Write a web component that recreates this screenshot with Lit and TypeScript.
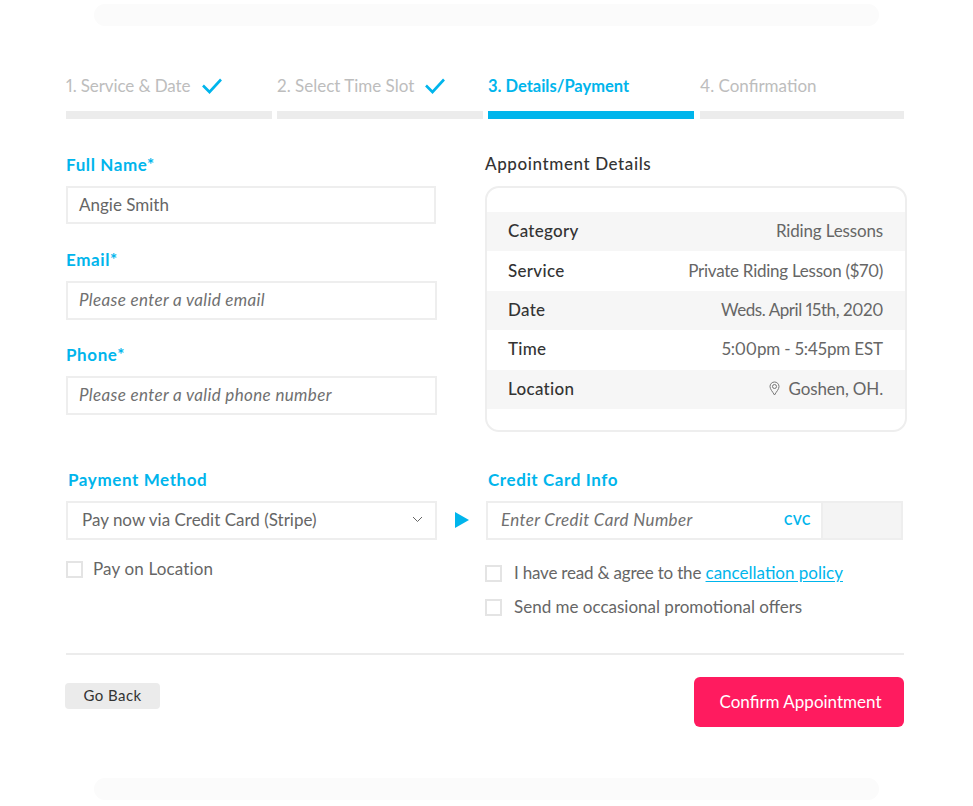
import { LitElement, html, css, svg } from "lit";
import { customElement } from "lit/decorators.js";

const check = svg`<path d="M1 7.500l6.500 6.500L19 1.500" fill="none" stroke="#00b5ec" stroke-width="2.600"/>`;

const rows = [
  ["Category", "Riding Lessons"],
  ["Service", "Private Riding Lesson ($70)"],
  ["Date", "Weds. April 15th, 2020"],
  ["Time", "5:00pm - 5:45pm EST"],
  ["Location", "Goshen, OH."],
];

@customElement("app-root")
export class AppRoot extends LitElement {
  static styles = css`
    :host {
      display: block;
      height: 806px;
      overflow: hidden;
      background: #fff;
      font-family: "Lato", "Open Sans", sans-serif;
      font-size: 17px;
      font-variant-numeric: proportional-nums;
      color: #666;
    }
    .pill {
      width: 785px;
      height: 22px;
      margin-left: 94px;
      border-radius: 11px;
      background: #fbfbfb;
    }
    .pill.top { margin-top: 4px; }
    .pill.bottom { margin-top: 51px; }
    .page { width: 841px; margin-left: 66px; }

    .steps {
      display: grid;
      grid-template-columns: 206px 206px 206px 205px;
      column-gap: 5px;
      width: 839px;
      margin-top: 50px;
    }
    .step { color: #bdbdbd; }
    .step:last-child { margin-left: 1px; }
    .step .name { display: flex; align-items: center; gap: 11px; height: 20px; line-height: 20px; }
    .step .name svg { width: 21px; height: 16px; }
    .step:first-child .name { gap: 12px; letter-spacing: -0.1px; }
    .step .bar { height: 8px; margin-top: 15px; background: #ececec; }
    .step.on { color: #00b5ec; font-weight: 700; font-size: 16.500px; }
    .step.on .bar { background: #00b5ec; }

    .top-grid {
      display: grid;
      grid-template-columns: 371px 422px;
      column-gap: 48px;
      margin-top: 35px;
    }
    .label { height: 20px; line-height: 22px; color: #00b5ec; font-weight: 700; letter-spacing: 0.6px; }
    .field + .field { margin-top: 25px; }
    .field:last-child { margin-top: 24px; }
    .input {
      box-sizing: border-box;
      display: flex;
      align-items: center;
      height: 39px;
      margin-top: 12px;
      padding: 0 11px 2px;
      border: 2px solid #eeeeee;
      background: #fff;
      white-space: nowrap;
    }
    .input.name { width: 370px; height: 38px; }
    .ph { font-style: italic; color: #707070; letter-spacing: 0.35px; }

    h2 {
      margin: 0;
      height: 20px;
      line-height: 20px;
      font-size: 17px;
      font-weight: 500;
      letter-spacing: 0.6px;
      color: #333;
    }
    .card {
      box-sizing: border-box;
      height: 246px;
      margin-top: 12px;
      padding: 24px 0;
      border: 2px solid #eeeeee;
      border-radius: 14px;
    }
    .row {
      box-sizing: border-box;
      display: flex;
      justify-content: space-between;
      align-items: center;
      height: 39.400px;
      padding: 0 22px 2px 21px;
    }
    .row:nth-child(odd) { background: #f6f6f6; }
    .row b { font-weight: 500; color: #333; letter-spacing: 0.3px; }
    .row span { display: flex; align-items: center; gap: 9px; letter-spacing: -0.15px; }
    .row:nth-child(2) span { letter-spacing: -0.25px; }
    .row:nth-child(3) span { letter-spacing: -0.42px; }

    .pay-grid {
      display: grid;
      grid-template-columns: 371px 417px;
      column-gap: 49px;
      margin-top: 37px;
    }
    .pay-grid .label { padding-left: 2px; }
    .select { position: relative; justify-content: space-between; padding: 0 12px 2px 14px; }
    .select .arrow { position: absolute; left: 387px; top: 9px; }
    .card-input { padding: 0; }
    .card-input .num {
      flex: 1;
      display: flex;
      align-items: center;
      justify-content: space-between;
      padding: 0 10px 2px 13px;
    }
    .cvc { font-size: 12.500px; font-weight: 700; color: #00b5ec; letter-spacing: 0.7px; margin-top: 2px; }
    .card-input .code {
      box-sizing: border-box;
      width: 80px;
      height: 100%;
      background: #f4f4f4;
      border-left: 2px solid #eeeeee;
    }
    .opt { display: flex; align-items: center; gap: 10px; height: 20px; white-space: nowrap; }
    .opt > span { margin-bottom: 2px; }
    .box {
      box-sizing: border-box;
      width: 17px;
      height: 17px;
      border: 2px solid #e4e4e4;
    }
    .left-opt { margin-top: 19px; letter-spacing: 0.15px; }
    .right-opts { display: grid; row-gap: 14px; margin-top: 23px; margin-left: -1px; }
    .right-opts .opt { gap: 12px; }
    .lead { letter-spacing: -0.2px; }
    a { color: #00b5ec; text-decoration: underline; text-underline-offset: 2px; }

    .rule { width: 838px; height: 2px; margin-top: 36px; background: #ececec; }
    .actions {
      display: flex;
      justify-content: space-between;
      align-items: flex-start;
      width: 838px;
      margin-top: 22px;
    }
    .back {
      width: 95px;
      height: 26px;
      margin: 6px 0 0 -1px;
      line-height: 25px;
      text-align: center;
      font-size: 15px;
      letter-spacing: 0.45px;
      color: #333;
      background: #ebebeb;
      border-radius: 4px;
    }
    .confirm {
      box-sizing: border-box;
      width: 210px;
      height: 50px;
      padding-left: 3px;
      line-height: 50px;
      text-align: center;
      color: #fff;
      background: #ff1b5f;
      border-radius: 6px;
    }
  `;

  render() {
    return html`
      <div class="pill top"></div>
      <div class="page">
        <div class="steps">
          <div class="step"><div class="name">1. Service &amp; Date <svg viewBox="0 0 21 16">${check}</svg></div><div class="bar"></div></div>
          <div class="step"><div class="name">2. Select Time Slot <svg viewBox="0 0 21 16">${check}</svg></div><div class="bar"></div></div>
          <div class="step on"><div class="name">3. Details/Payment</div><div class="bar"></div></div>
          <div class="step"><div class="name">4. Confirmation</div><div class="bar"></div></div>
        </div>

        <div class="top-grid">
          <div>
            <div class="field"><div class="label">Full Name*</div><div class="input name">Angie Smith</div></div>
            <div class="field"><div class="label">Email*</div><div class="input ph">Please enter a valid email</div></div>
            <div class="field"><div class="label">Phone*</div><div class="input ph">Please enter a valid phone number</div></div>
          </div>
          <div>
            <h2>Appointment Details</h2>
            <div class="card">
              ${rows.map(
                ([k, v]) => html`<div class="row">
                  <b>${k}</b>
                  <span>
                    ${k === "Location"
                      ? html`<svg width="11" height="15" viewBox="0 0 11 15" fill="none" stroke="#777" stroke-width="1">
                          <path d="M5.500 14C3.500 10.500 1 8.200 1 5.500a4.500 4.500 0 0 1 9 0C10 8.200 7.500 10.500 5.500 14z" />
                          <circle cx="5.500" cy="5.500" r="2" />
                        </svg>`
                      : ""}
                    ${v}
                  </span>
                </div>`
              )}
            </div>
          </div>
        </div>

        <div class="pay-grid">
          <div>
            <div class="label">Payment Method</div>
            <div class="input select">
              Pay now via Credit Card (Stripe)
              <svg width="11" height="7" viewBox="0 0 11 7" fill="none" stroke="#666" stroke-width="1"><path d="M1 1l4.500 4.500L10 1" /></svg>
              <svg class="arrow" width="15" height="16" viewBox="0 0 15 16"><path d="M0 0l14 8-14 8z" fill="#00b5ec" /></svg>
            </div>
            <div class="opt left-opt"><div class="box"></div><span>Pay on Location</span></div>
          </div>
          <div>
            <div class="label">Credit Card Info</div>
            <div class="input card-input">
              <div class="num"><span class="ph">Enter Credit Card Number</span><span class="cvc">CVC</span></div>
              <div class="code"></div>
            </div>
            <div class="right-opts">
              <div class="opt"><div class="box"></div><span><span class="lead">I have read &amp; agree to the</span> <a href="#">cancellation policy</a></span></div>
              <div class="opt"><div class="box"></div><span>Send me occasional promotional offers</span></div>
            </div>
          </div>
        </div>

        <div class="rule"></div>
        <div class="actions">
          <div class="back">Go Back</div>
          <div class="confirm">Confirm Appointment</div>
        </div>
      </div>
      <div class="pill bottom"></div>
    `;
  }
}
